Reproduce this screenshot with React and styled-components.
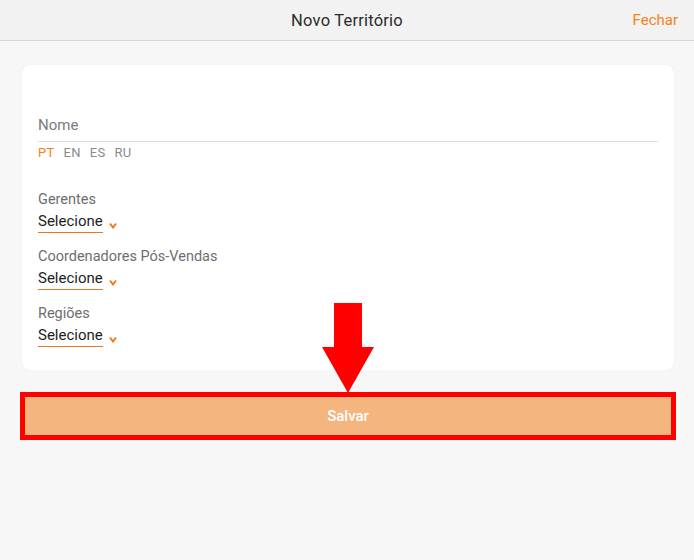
import React from "react";
import styled, { createGlobalStyle } from "styled-components";

const Global = createGlobalStyle`
  html, body { margin: 0; padding: 0; background: #f7f7f7; }
  body { font-family: Roboto, "Liberation Sans", sans-serif; }
  * { box-sizing: border-box; }
`;

const Page = styled.div`
  position: relative;
  width: 694px;
  height: 560px;
  background: #f7f7f7;
  overflow: hidden;
`;

const Header = styled.header`
  position: relative;
  height: 41px;
  background: #f2f2f2;
  border-bottom: 1px solid #d8d8d8;
  display: flex;
  align-items: center;
  justify-content: center;
`;

const Title = styled.h1`
  margin: 0;
  font-size: 16.5px;
  font-weight: 400;
  color: #2b2b2b;
  letter-spacing: 0.2px;
`;

const Close = styled.button`
  position: absolute;
  right: 16px;
  top: 0;
  height: 40px;
  border: 0;
  background: none;
  padding: 0;
  font-family: inherit;
  font-size: 15px;
  color: #f58220;
`;

const Body = styled.main`
  padding: 24px 20px 0 22px;
  display: flex;
  flex-direction: column;
`;

const Card = styled.section`
  width: 652px;
  background: #fff;
  border-radius: 8px;
  box-shadow: 0 0 1px rgba(0, 0, 0, 0.12);
  padding: 50px 16px 23px;
  display: flex;
  flex-direction: column;
`;

const NameInput = styled.div`
  height: 27px;
  line-height: 20px;
  font-size: 15px;
  color: #7a7a7a;
  padding-bottom: 6px;
  border-bottom: 1px solid #dcdcdc;
`;

const Langs = styled.div`
  margin-top: 3px;
  display: flex;
  gap: 9px;
  font-size: 13px;
  line-height: 15px;
  letter-spacing: 0.3px;
`;

const Lang = styled.span`
  color: ${(p) => (p.$active ? "#f58220" : "#8a8a8a")};
`;

const Group = styled.div`
  margin-top: ${(p) => (p.$first ? "31px" : "15px")};
  display: flex;
  flex-direction: column;
  align-items: flex-start;
`;

const Label = styled.label`
  font-size: 14.5px;
  line-height: 17px;
  color: #6e6e6e;
`;

const SelectRow = styled.div`
  margin-top: 3px;
  display: flex;
  align-items: center;
  gap: 6px;
`;

const SelectText = styled.span`
  font-size: 15px;
  line-height: 20px;
  color: #1e1e1e;
  padding-bottom: 1px;
  border-bottom: 1px solid #e87722;
`;

const Chevron = styled.svg`
  width: 8px;
  height: 7px;
  margin-top: 6px;
`;

const SaveFrame = styled.div`
  margin: 22px 0 0 -2px;
  width: 656px;
  border: 5px solid #ff0000;
`;

const SaveButton = styled.button`
  display: block;
  width: 100%;
  height: 38px;
  border: 0;
  background: #f4b57f;
  color: #fff;
  font-family: inherit;
  font-size: 15px;
  font-weight: 500;
`;

const Arrow = styled.svg`
  position: absolute;
  left: 321px;
  top: 303px;
  width: 54px;
  height: 91px;
`;

const groups = ["Gerentes", "Coordenadores Pós-Vendas", "Regiões"];

export default function App() {
  return (
    <Page>
      <Global />
      <Header>
        <Title>Novo Território</Title>
        <Close>Fechar</Close>
      </Header>
      <Body>
        <Card>
          <NameInput>Nome</NameInput>
          <Langs>
            <Lang $active>PT</Lang>
            <Lang>EN</Lang>
            <Lang>ES</Lang>
            <Lang>RU</Lang>
          </Langs>
          {groups.map((g, i) => (
            <Group key={g} $first={i === 0}>
              <Label>{g}</Label>
              <SelectRow>
                <SelectText>Selecione</SelectText>
                <Chevron viewBox="0 0 8 7">
                  <path d="M1 1.5 L4 5.5 L7 1.5" fill="none" stroke="#f07a1e" strokeWidth="2" />
                </Chevron>
              </SelectRow>
            </Group>
          ))}
        </Card>
        <SaveFrame>
          <SaveButton>Salvar</SaveButton>
        </SaveFrame>
      </Body>
      <Arrow viewBox="0 0 54 91">
        <polygon points="13,0 41,0 41,44 53,44 27,90 1,44 13,44" fill="#ff0000" />
      </Arrow>
    </Page>
  );
}
